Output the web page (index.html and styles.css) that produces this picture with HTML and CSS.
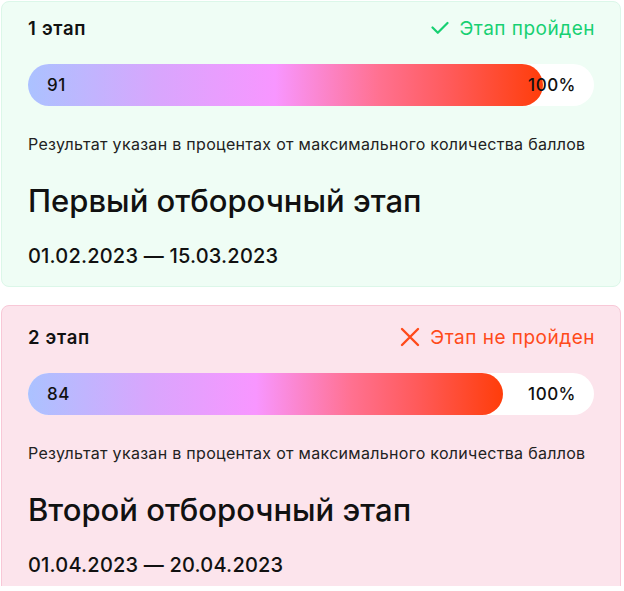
FILE: index.html
```html
<!DOCTYPE html>
<html lang="ru">
<head>
<meta charset="utf-8">
<title>Этапы</title>
<link rel="stylesheet" href="styles.css">
</head>
<body>
<div class="stages">
  <section class="card card--pass">
    <div class="card__head">
      <span class="card__label">1 этап</span>
      <span class="status status--pass">
        <svg class="status__icon" viewBox="0 0 18 14" width="18" height="14" aria-hidden="true"><path d="M1.5 6.5 L6.8 11.8 L16.5 2" fill="none" stroke="currentColor" stroke-width="2.2" stroke-linecap="round" stroke-linejoin="round"/></svg>
        Этап пройден
      </span>
    </div>
    <div class="bar">
      <div class="bar__fill" style="width: 91%"></div>
      <span class="bar__value">91</span>
      <span class="bar__max">100%</span>
    </div>
    <p class="card__note">Результат указан в процентах от максимального количества баллов</p>
    <h2 class="card__title">Первый отборочный этап</h2>
    <p class="card__dates">01.02.2023 — 15.03.2023</p>
  </section>
  <section class="card card--fail">
    <div class="card__head">
      <span class="card__label">2 этап</span>
      <span class="status status--fail">
        <svg class="status__icon" viewBox="0 0 20 20" width="20" height="20" aria-hidden="true"><path d="M2 2 L18 18 M18 2 L2 18" fill="none" stroke="currentColor" stroke-width="2.4" stroke-linecap="round"/></svg>
        Этап не пройден
      </span>
    </div>
    <div class="bar">
      <div class="bar__fill" style="width: 84%"></div>
      <span class="bar__value">84</span>
      <span class="bar__max">100%</span>
    </div>
    <p class="card__note">Результат указан в процентах от максимального количества баллов</p>
    <h2 class="card__title">Второй отборочный этап</h2>
    <p class="card__dates">01.04.2023 — 20.04.2023</p>
  </section>
</div>
</body>
</html>
```

FILE: styles.css
```css
* { box-sizing: border-box; }
html, body { margin: 0; padding: 0; background: #fff; }
body {
  font-family: "Inter", "Noto Sans", sans-serif;
  color: #111;
}
.stages {
  display: flex;
  flex-direction: column;
  gap: 18px;
  padding: 1px 3px 0 1px;
  height: 586px;
  overflow: hidden;
}
.card {
  border-radius: 8px;
  border: 1px solid;
  padding: 14px 26px 18px 26px;
  flex-shrink: 0;
}
.card--pass { background: #effdf5; border-color: #dcf7e9; }
.card--fail { background: #fce4ec; border-color: #f8c8d7; padding-top: 19px; }
.card__head {
  display: flex;
  justify-content: space-between;
  align-items: center;
  height: 24px;
}
.card__label {
  font-size: 18.5px;
  font-weight: 600;
  letter-spacing: 0.7px;
}
.status {
  display: flex;
  align-items: center;
  gap: 10px;
  font-size: 19px;
  font-weight: 400;
  letter-spacing: 0.5px;
  margin-right: -1px;
}
.status--pass { color: #17d072; }
.status--fail { color: #ff4a1a; }
.bar {
  position: relative;
  margin-top: 24px;
  height: 42px;
  background: #fff;
  border-radius: 21px;
  display: flex;
  align-items: center;
  justify-content: space-between;
  padding: 0 18px 0 19px;
}
.bar__fill {
  position: absolute;
  left: 0; top: 0; bottom: 0;
  border-radius: 21px;
  background: linear-gradient(90deg, #abc2ff 0%, #d8a6fd 25%, #f896ff 48%, #ff7191 68%, #ff5a5a 82%, #ff3d0a 100%);
}
.bar__value, .bar__max {
  position: relative;
  font-size: 17px;
  font-weight: 500;
  letter-spacing: 0.5px;
  color: #111;
}
.card__note {
  margin: 28px 0 0;
  font-size: 16px;
  letter-spacing: 0.3px;
  color: #222;
}
.card__title {
  margin: 28px 0 0;
  font-size: 31px;
  font-weight: 500;
  line-height: 1.2;
}
.card__dates {
  margin: 25px 0 0;
  font-size: 20px;
  font-weight: 500;
  letter-spacing: 0.2px;
}
```
